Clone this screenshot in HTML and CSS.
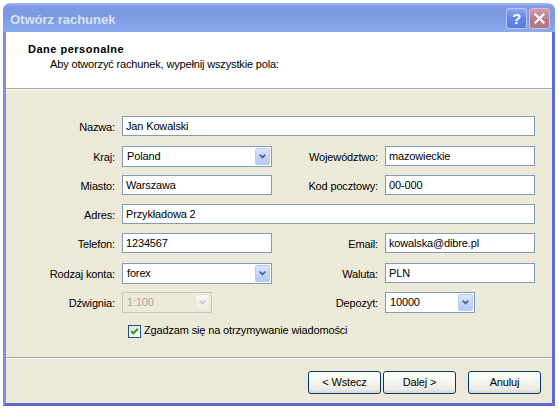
FILE: index.html
```html
<!DOCTYPE html>
<html lang="pl">
<head>
<meta charset="utf-8">
<title>Otwórz rachunek</title>
<link rel="stylesheet" href="styles.css">
</head>
<body>
<div class="window">
  <div class="titlebar">
    <span class="title">Otwórz rachunek</span>
    <div class="caption-buttons">
      <span class="cbtn help">?</span>
      <span class="cbtn close"><svg width="11" height="11" viewBox="0 0 11 11"><path d="M1.5 1.5 L9.5 9.5 M9.5 1.5 L1.5 9.5" stroke="#fff" stroke-width="2.2" stroke-linecap="square"/></svg></span>
    </div>
  </div>
  <div class="client">
    <div class="header">
      <div class="h-title">Dane personalne</div>
      <div class="h-sub">Aby otworzyć rachunek, wypełnij wszystkie pola:</div>
    </div>
    <div class="form">
      <div class="row">
        <div class="label">Nazwa:</div>
        <div class="field wide">Jan Kowalski</div>
      </div>
      <div class="row gap10">
        <div class="label">Kraj:</div>
        <div class="combo"><span class="combo-text">Poland</span><span class="drop"><svg width="7" height="5" viewBox="0 0 7 5"><polyline points="0.7,0.7 3.5,3.5 6.3,0.7" fill="none" stroke="#4d6185" stroke-width="1.8"/></svg></span></div>
        <div class="label">Województwo:</div>
        <div class="field">mazowieckie</div>
      </div>
      <div class="row">
        <div class="label">Miasto:</div>
        <div class="field">Warszawa</div>
        <div class="label">Kod pocztowy:</div>
        <div class="field">00-000</div>
      </div>
      <div class="row">
        <div class="label">Adres:</div>
        <div class="field wide">Przykładowa 2</div>
      </div>
      <div class="row">
        <div class="label">Telefon:</div>
        <div class="field">1234567</div>
        <div class="label">Email:</div>
        <div class="field">kowalska@dibre.pl</div>
      </div>
      <div class="row gap10">
        <div class="label">Rodzaj konta:</div>
        <div class="combo"><span class="combo-text">forex</span><span class="drop"><svg width="7" height="5" viewBox="0 0 7 5"><polyline points="0.7,0.7 3.5,3.5 6.3,0.7" fill="none" stroke="#4d6185" stroke-width="1.8"/></svg></span></div>
        <div class="label">Waluta:</div>
        <div class="field">PLN</div>
      </div>
      <div class="row">
        <div class="label">Dźwignia:</div>
        <div class="combo short disabled"><span class="combo-text">1:100</span><span class="drop"><svg width="7" height="5" viewBox="0 0 7 5"><polyline points="0.7,0.7 3.5,3.5 6.3,0.7" fill="none" stroke="#c9c7ba" stroke-width="1.8"/></svg></span></div>
        <div class="label">Depozyt:</div>
        <div class="combo short"><span class="combo-text">10000</span><span class="drop"><svg width="7" height="5" viewBox="0 0 7 5"><polyline points="0.7,0.7 3.5,3.5 6.3,0.7" fill="none" stroke="#4d6185" stroke-width="1.8"/></svg></span></div>
      </div>
      <div class="check-row">
        <span class="checkbox"><svg width="11" height="11" viewBox="0 0 11 11"><polyline points="2.2,5.2 4.3,7.5 8.8,2.8" fill="none" stroke="#21a121" stroke-width="2"/></svg></span>
        <span class="check-label">Zgadzam się na otrzymywanie wiadomości</span>
      </div>
    </div>
    <div class="footer">
      <button class="btn">&lt; Wstecz</button>
      <button class="btn next">Dalej &gt;</button>
      <button class="btn cancel">Anuluj</button>
    </div>
  </div>
</div>
</body>
</html>
```

FILE: styles.css
```css
html, body {
  margin: 0;
  padding: 0;
  background: #ffffff;
}

body {
  font-family: "Liberation Sans", Arial, sans-serif;
  font-size: 11px;
  line-height: 13px;
  letter-spacing: -0.15px;
  color: #000;
}

.window {
  margin: 3px 0 0 3px;
  width: 552px;
  height: 403px;
  display: flex;
  flex-direction: column;
}

.titlebar {
  height: 29px;
  flex: none;
  box-sizing: border-box;
  border-radius: 7px 7px 0 0;
  background: linear-gradient(to bottom, #a9c0f2 0, #8aa6ea 2px, #7b98e1 5px, #7c9ae2 45%, #84a3e8 80%, #8cabee 100%);
  display: flex;
  align-items: flex-start;
  justify-content: space-between;
  padding: 0 5px 0 7px;
}

.title {
  margin-top: 9px;
  font-weight: bold;
  font-size: 13px;
  line-height: 15px;
  letter-spacing: 0;
  color: #d8e4f8;
}

.caption-buttons {
  margin-top: 5px;
  display: flex;
  gap: 2px;
}

.cbtn {
  width: 21px;
  height: 21px;
  box-sizing: border-box;
  border-radius: 3px;
  display: flex;
  align-items: center;
  justify-content: center;
}

.help {
  border: 1px solid #b7c9f4;
  background: linear-gradient(to bottom, #8ba9f1, #5f85e6 50%, #5a7fe2);
  color: #fff;
  font-weight: bold;
  font-size: 15px;
  line-height: 15px;
  letter-spacing: 0;
}

.close {
  border: 1px solid #dcbcc6;
  background: linear-gradient(to bottom, #d19ca9, #b77d8c 55%, #b07585);
}

.client {
  flex: 1;
  display: flex;
  flex-direction: column;
  border-style: solid;
  border-width: 0 3px 3px 3px;
  border-color: #6f86db #5b6cd2 #5a69cf #7b91e2;
  background: #ece9d8;
}

.header {
  height: 57px;
  flex: none;
  box-sizing: border-box;
  background: #ffffff;
  padding-top: 11px;
  border-bottom: 1px solid #aca899;
  box-shadow: 0 1px 0 #ffffff;
}

.h-title {
  padding-left: 22px;
  font-weight: bold;
  letter-spacing: 0.5px;
}

.h-sub {
  padding-left: 44px;
  margin-top: 2px;
}

.form {
  flex: 1;
  padding-top: 26px;
  margin-top: 1px;
  display: flex;
  flex-direction: column;
}

.row {
  display: grid;
  grid-template-columns: 109px 150px 99px 150px;
  column-gap: 7px;
  align-items: start;
  height: 20px;
}

.row + .row {
  margin-top: 9px;
}

.row.gap10 {
  margin-top: 10px;
}

.label {
  text-align: right;
  padding-top: 5px;
  white-space: nowrap;
}

.field {
  box-sizing: border-box;
  height: 20px;
  border: 1px solid #7f9db9;
  background: #fff;
  padding: 1px 3px 0;
  line-height: 17px;
  white-space: nowrap;
  overflow: hidden;
}

.field.wide {
  grid-column: 2 / 5;
}

.combo {
  box-sizing: border-box;
  height: 21px;
  border: 1px solid #7f9db9;
  background: #fff;
  padding: 1px;
  display: flex;
}

.combo.short {
  width: 90px;
}

.combo-text {
  flex: 1;
  padding-left: 3px;
  line-height: 17px;
}

.drop {
  width: 15px;
  height: 17px;
  box-sizing: border-box;
  border: 1px solid #b6cbf9;
  border-radius: 2px;
  background: linear-gradient(to bottom, #dce7fe 0, #c6d7fc 45%, #b4c9f7 100%);
  display: flex;
  align-items: center;
  justify-content: center;
}

.combo.disabled {
  border-color: #c9c7ba;
  background: #ece9d8;
  color: #aca899;
}

.combo.disabled .drop {
  border-color: #e5e3d8;
  background: linear-gradient(to bottom, #f7f6f0, #efede3);
}

.check-row {
  margin-top: 13px;
  padding-left: 122px;
  display: flex;
  align-items: flex-start;
  gap: 3px;
}

.checkbox {
  width: 13px;
  height: 13px;
  box-sizing: border-box;
  border: 1px solid #1c5180;
  background: linear-gradient(135deg, #dcdcd6 0, #f4f4f0 60%, #ffffff 100%);
  display: flex;
  align-items: center;
  justify-content: center;
}

.check-label {
  margin-top: -1px;
  white-space: nowrap;
}

.footer {
  height: 46px;
  flex: none;
  box-sizing: border-box;
  border-top: 1px solid #aca899;
  box-shadow: inset 0 1px 0 #ffffff;
  padding: 13px 11px 0 0;
  display: flex;
  justify-content: flex-end;
  align-items: flex-start;
}

.btn {
  width: 73px;
  height: 23px;
  box-sizing: border-box;
  margin: 0;
  padding: 0;
  border: 1px solid #003c74;
  border-radius: 3px;
  background: linear-gradient(to bottom, #ffffff 0, #f6f6f2 40%, #ecebe5 80%, #d9d6cb 100%);
  font-family: "Liberation Sans", Arial, sans-serif;
  font-size: 11px;
  line-height: 13px;
  letter-spacing: -0.15px;
  color: #000;
}

.btn.next {
  margin-left: 2px;
}

.btn.cancel {
  margin-left: 12px;
}
```
